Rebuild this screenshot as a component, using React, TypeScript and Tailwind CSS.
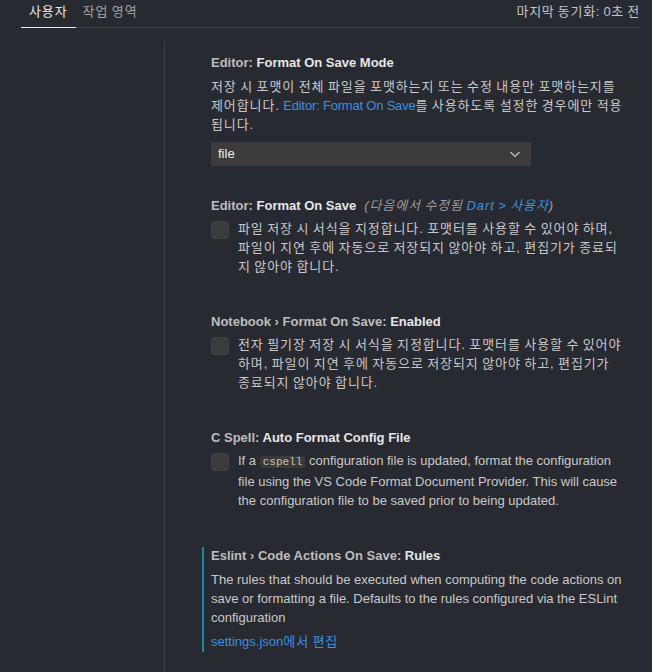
import React from 'react';

const font = "font-['Liberation_Sans','Noto_Sans_CJK_KR',sans-serif]";
// hangul in Noto CJK runs a bit narrower than the reference, widen the letters but not the spaces
const ko = 'tracking-[0.9px] [word-spacing:-1px]';

function Title({ category, label, children }: { category: string; label: string; children?: React.ReactNode }) {
  return (
    <div className="h-[18px] leading-[18px] text-[13px] font-bold whitespace-nowrap">
      <span className="text-[#bdbdbd]">{category}</span>
      <span className="text-[#e6e6e6]">{label}</span>
      {children}
    </div>);

}

function Checkbox() {
  return <div className="mt-[2px] w-[18px] h-[18px] shrink-0 rounded-[3px] bg-[#3c3c3c] border border-[#3f3f3f]" />;
}

export default function App() {
  return (
    <div className={`${font} bg-[#282a32] min-h-[672px] w-full text-[13px] text-[#c8c8c8] overflow-hidden`}>
      <div className={`ml-[21px] mr-[12px] h-[28px] flex items-start border-b border-[#3e4049] ${ko}`}>
        <div className="h-[28px] px-[8px] pt-[3px] leading-[18px] text-[#e8e8e8] border-b border-[#e8e8e8] -mb-px">사용자</div>
        <div className="h-[28px] px-[7px] pt-[3px] leading-[18px] text-[#a3a3a3]">작업 영역</div>
        <div className="ml-auto pt-[3px] leading-[18px] text-[#c4c4c4] tracking-[0.7px]">마지막 동기화: 0초 전</div>
      </div>

      <div className="flex pt-[13px]">
        <div className="w-[165px] shrink-0 border-r border-[#3e4049] min-h-[631px]" />
        <div className="flex-1 pr-[28px] pl-[37px]">
          {/* format on save mode */}
          <div className="pt-[13px] pl-[9px]">
            <Title category="Editor: " label="Format On Save Mode" />
            <p className={`mt-[5px] leading-[19px] ${ko}`}>
              저장 시 포맷이 전체 파일을 포맷하는지 또는 수정 내용만 포맷하는지를 제어합니다.{' '}
              <span className="text-[#3d8fe0] tracking-[-0.2px] [word-spacing:0]">Editor: Format On Save</span>를 사용하도록 설정한 경우에만 적용됩니다.
            </p>
            <div className="mt-[8px] w-[320px] h-[24px] bg-[#3c3c3c] flex items-center pl-[7px] pr-[8px] text-[#f0f0f0]">
              <span className="flex-1">file</span>
              <svg width="16" height="16" viewBox="0 0 16 16" fill="none">
                <path d="M3.5 6 L8 10.5 L12.5 6" stroke="#c5c5c5" strokeWidth="1.2" />
              </svg>
            </div>
          </div>

          <div className="mt-[31px] pl-[9px]">
            <Title category="Editor: " label="Format On Save">
              <span className={`ml-[8px] italic font-normal text-[#9d9d9d] ${ko}`}>
                (다음에서 수정됨 <span className="text-[#3d8fe0]">Dart &gt; 사용자</span>)
              </span>
            </Title>
            <div className="mt-[4px] flex gap-[9px]">
              <Checkbox />
              <p className={`leading-[19px] ${ko}`}>
                파일 저장 시 서식을 지정합니다. 포맷터를 사용할 수 있어야 하며, 파일이 지연 후에 자동으로 저장되지 않아야 하고, 편집기가 종료되지 않아야 합니다.
              </p>
            </div>
          </div>

          <div className="mt-[37px] pl-[9px]">
            <Title category="Notebook › Format On Save: " label="Enabled" />
            <div className="mt-[4px] flex gap-[9px]">
              <Checkbox />
              <p className={`leading-[19px] ${ko}`}>
                전자 필기장 저장 시 서식을 지정합니다. 포맷터를 사용할 수 있어야 하며, 파일이 지연 후에 자동으로 저장되지 않아야 하고, 편집기가 종료되지 않아야 합니다.
              </p>
            </div>
          </div>

          <div className="mt-[37px] pl-[9px]">
            <Title category="C Spell: " label="Auto Format Config File" />
            <div className="mt-[4px] flex gap-[9px]">
              <Checkbox />
              <p className="leading-[19px]">
                If a{' '}
                <code className="font-['Liberation_Mono',monospace] text-[11px] px-[3px] rounded-[3px] bg-[#383a40] text-[#d5c08f]">cspell</code>{' '}
                configuration file is updated, format the configuration file using the VS Code Format Document Provider. This will cause the configuration file to be saved prior to being updated.
              </p>
            </div>
          </div>

          <div className="mt-[37px] pl-[7px] border-l-2 border-[#1d88a8] pb-[1px]">
            <Title category="Eslint › Code Actions On Save: " label="Rules" />
            <p className="mt-[5px] leading-[19px]">
              The rules that should be executed when computing the code actions on save or formatting a file. Defaults to the rules configured via the ESLint configuration
            </p>
            <div className="mt-[6px] leading-[18px] text-[#3d8fe0]">
              settings.json<span className={ko}>에서 편집</span>
            </div>
          </div>
        </div>
      </div>
    </div>);

}
